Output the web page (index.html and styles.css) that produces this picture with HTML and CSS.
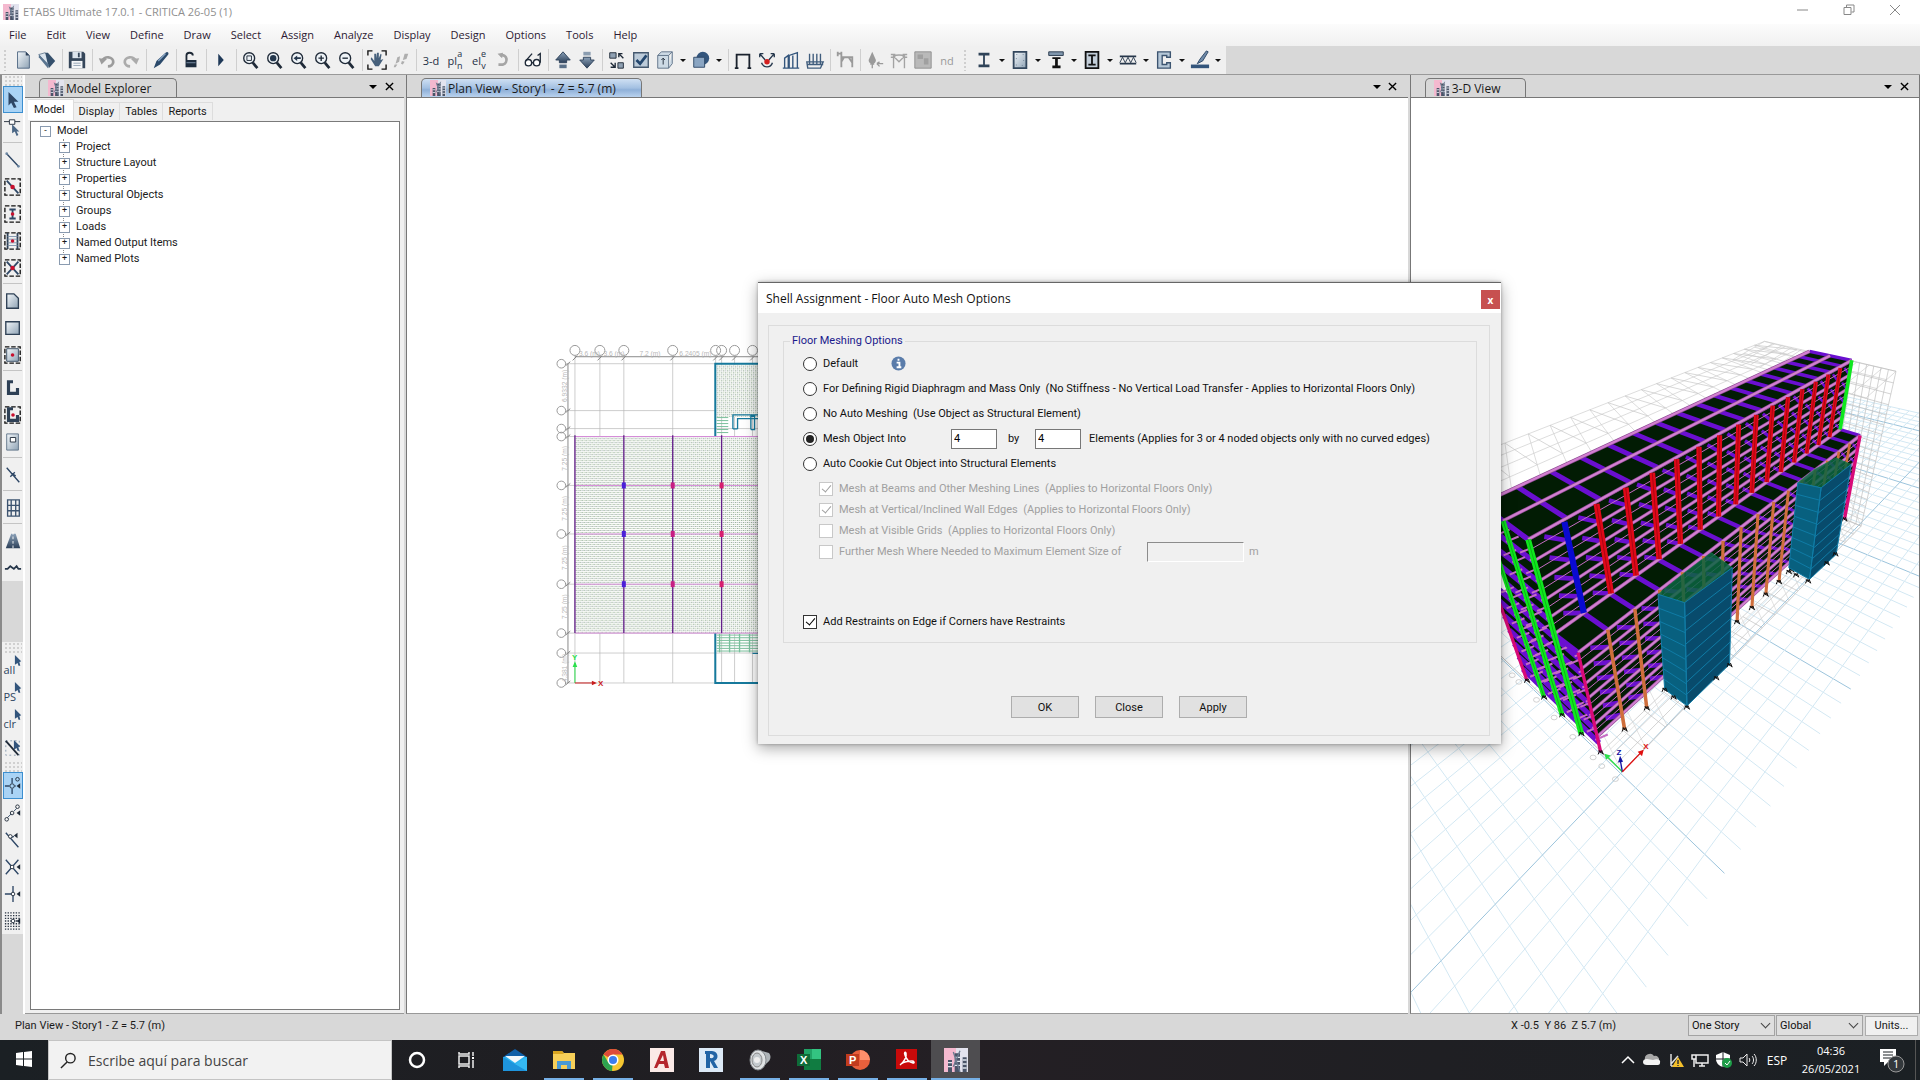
FILE: index.html
```html
<!DOCTYPE html>
<html lang="en">
<head>
  <meta charset="UTF-8">
  <meta name="viewport" content="width=device-width, initial-scale=1.0">
  <title>ETABS Ultimate 17.0.1 - CRITICA 26-05 (1)</title>
  <link rel="stylesheet" href="styles.css">
</head>
<body>
  <!-- Shared icons -->
  <svg class="icon-defs" aria-hidden="true">
    <defs>
      <linearGradient id="steel" x1="0" y1="0" x2="1" y2="1">
        <stop offset="0" stop-color="#f4f8fb"/><stop offset="1" stop-color="#8fa3b5"/>
      </linearGradient>
      <linearGradient id="navy" x1="0" y1="0" x2="0" y2="1">
        <stop offset="0" stop-color="#8ba1b8"/><stop offset="1" stop-color="#2c4059"/>
      </linearGradient>
    </defs>
    <symbol id="i-app" viewBox="0 0 18 18">
      <path d="M0 0h18v18H0z" fill="#f4b9cf"/><path d="M9 0h9v18H9z" fill="#e3e3ee"/>
      <path d="M3 9h3v9H3zM8 4h4v14H8zM14 7h3v11h-3z" fill="#4a5468"/>
      <path d="M8 7h4M8 10h4M8 13h4M14 9h3M14 12h3M14 15h3M3 11h3M3 14h3" stroke="#dfe6ee"/>
      <path d="M7 3l5 15M12 2l-5 12" stroke="#6b7b90"/>
    </symbol>
    <symbol id="i-new" viewBox="0 0 20 22"><path d="M4 2h9l4 4v14H4z" fill="url(#steel)" stroke="#4c6480"/><path d="M13 2v4h4z" fill="#2c4059"/></symbol>
    <symbol id="i-open" viewBox="0 0 20 22"><path d="M1 5l7-2 8 9-5 5z" fill="#dbe5ee" stroke="#6b8095"/><path d="M8 3l3 0 8 9-7 8-1-4z" fill="#35506c"/><path d="M1 5v3l10 12 1-4z" fill="#5a7590"/></symbol>
    <symbol id="i-save" viewBox="0 0 20 22"><path d="M1 2h16l2 2v16H1z" fill="#35465a"/><path d="M5 2h10v7H5z" fill="#dce4ec"/><path d="M11 3h2v5h-2z" fill="#35465a"/><path d="M4 12h12v8H4z" fill="#f4f6f8"/><path d="M6 14.500h8M6 17h8" stroke="#8fa0b2"/></symbol>
    <symbol id="i-undo" viewBox="0 0 20 22"><path d="M5 12a6 5 0 1 1 6 6" fill="none" stroke="#9c9c9c" stroke-width="3"/><path d="M1 9l9 1-6 6z" fill="#9c9c9c"/></symbol>
    <symbol id="i-redo" viewBox="0 0 20 22"><path d="M15 12a6 5 0 1 0-6 6" fill="none" stroke="#ababab" stroke-width="3"/><path d="M19 9l-9 1 6 6z" fill="#ababab"/></symbol>
    <symbol id="i-brush" viewBox="0 0 20 22"><path d="M2 20l3-8L15 3c2-2 4 0 3 2L9 16z" fill="#2b4a6b"/><path d="M7 12l8-8" stroke="#86a4c4" stroke-width="1.500"/></symbol>
    <symbol id="i-lock" viewBox="0 0 20 22"><path d="M5 11V6c0-4 7-4 7 0" fill="none" stroke="#1d2835" stroke-width="2"/><path d="M4 11h12v8H4z" fill="#1d2c3e"/><path d="M5 14h10" stroke="#7e93aa"/></symbol>
    <symbol id="i-play" viewBox="0 0 20 22"><path d="M7 4l6 7-6 7z" fill="#1f3958"/></symbol>
    <symbol id="i-mag" viewBox="0 0 20 22"><circle cx="8" cy="9" r="6" fill="#eef3f7" stroke="#1f2a38" stroke-width="1.500"/><path d="M12 14l5 6" stroke="#1f2a38" stroke-width="3"/></symbol>
    <symbol id="i-hand" viewBox="0 0 22 22"><path d="M1 6V1h5M16 1h5v5M21 16v5h-5M6 21H1v-5" fill="none" stroke="#111" stroke-width="1.500"/><path d="M5 8l3 4V4h2v5l1-6h2v6l2-5 1 1-1 6 3-1-5 8H9l-5-8z" fill="#47617c"/></symbol>
    <symbol id="i-walk" viewBox="0 0 20 22"><path d="M4 15l2-7 3-1-1 6zM3 16h3l-2 3H2zM12 11l2-7 4 0-2 6zM11 12l3 1-2 3-2-1z" fill="#aeaeae"/></symbol>
    <symbol id="i-rotate" viewBox="0 0 20 22"><path d="M7 6c8-2 9 8 3 10H5" fill="none" stroke="#a5a5a5" stroke-width="3"/><path d="M4 4l6-1-1 6z" fill="#a5a5a5"/></symbol>
    <symbol id="i-glasses" viewBox="0 0 20 22"><circle cx="5" cy="14" r="3.500" fill="#fff" stroke="#1f2a38" stroke-width="1.500"/><circle cx="14" cy="14" r="3.500" fill="#fff" stroke="#1f2a38" stroke-width="1.500"/><path d="M9 14h2M2 12L9 4M18 14V4l-3 2" fill="none" stroke="#1f2a38" stroke-width="1.500"/></symbol>
    <symbol id="i-up" viewBox="0 0 20 22"><path d="M10 2l8 9h-4v3H6v-3H2z" fill="url(#navy)" stroke="#2c4059"/><path d="M6 16h8v4H6z" fill="#5a7088"/></symbol>
    <symbol id="i-down" viewBox="0 0 20 22"><path d="M10 20l8-9h-4V8H6v3H2z" fill="url(#navy)" stroke="#2c4059"/><path d="M6 2h8v4H6z" fill="#8b9db0"/></symbol>
    <symbol id="i-swap" viewBox="0 0 20 22"><path d="M2 3h7v6H2zM11 14h6v6h-6z" fill="#8fa0b2" stroke="#1f2a38"/><path d="M17 9l-5-5m0 4V4h4M3 14l5 5m0-5v5H3" fill="none" stroke="#1f2a38" stroke-width="1.500"/></symbol>
    <symbol id="i-check" viewBox="0 0 20 22"><path d="M2 3h16v16H2z" fill="#bccbd9" stroke="#44586e" stroke-width="1.500"/><path d="M5 11l4 4 7-9" fill="none" stroke="#24476e" stroke-width="3"/></symbol>
    <symbol id="i-cube" viewBox="0 0 20 22"><path d="M2 6h12v14H2zM2 6l4-4h12l-4 4M18 2v13l-4 5" fill="#cddae5" stroke="#5c7086"/><path d="M8 16V9M6 11l2-2 2 2" fill="none" stroke="#1f2a38"/></symbol>
    <symbol id="i-shape" viewBox="0 0 20 22"><circle cx="12" cy="9" r="7" fill="#33557c"/><path d="M2 8h12v11H2z" fill="#8aa5c2" stroke="#2b4565"/></symbol>
    <symbol id="i-frame" viewBox="0 0 20 22"><path d="M3 20V5h14v15M1 20h4M15 20h4" fill="none" stroke="#1a222d" stroke-width="2"/></symbol>
    <symbol id="i-joint" viewBox="0 0 20 22"><path d="M2 4l6 7M18 4l-6 7M2 4v4M2 4h4M18 4v4M18 4h-4M4 14c2 6 10 6 12 0" fill="none" stroke="#26384d" stroke-width="1.500"/><circle cx="10" cy="13" r="3" fill="#d32020"/></symbol>
    <symbol id="i-loads" viewBox="0 0 20 22"><path d="M1 20h18M3 20V9l4-3v14M8 20V6l9-3v17M12 6v14" fill="none" stroke="#33557c" stroke-width="1.500"/></symbol>
    <symbol id="i-area" viewBox="0 0 20 22"><path d="M1 13h18l-3 7H2zM4 4v12M8 4v12M12 4v12M16 4v12M2 16h17" fill="none" stroke="#405d7d" stroke-width="1.500"/></symbol>
    <symbol id="i-grey1" viewBox="0 0 20 22"><path d="M2 2v5M6 2v5M2 4h4M6 19V8h12v11M6 13l3-5M14 8l4 6" fill="none" stroke="#9a9a9a" stroke-width="2"/></symbol>
    <symbol id="i-grey2" viewBox="0 0 20 22"><path d="M7 2l4 9a4 4 0 0 1-8 0z" fill="#9a9a9a"/><path d="M7 14v6M5 16l2-2 2 2M12 15h7M12 15l3-2M12 15l3 3" fill="none" stroke="#9a9a9a" stroke-width="1.500"/></symbol>
    <symbol id="i-grey3" viewBox="0 0 20 22"><path d="M4 20V7l6 6 6-6v13M1 5h5M14 5h5M1 8h5M14 8h5M4 7c3-2 9-2 12 0" fill="none" stroke="#a3a3a3" stroke-width="1.500"/></symbol>
    <symbol id="i-grey4" viewBox="0 0 20 22"><path d="M1 2h18v18H1z" fill="#b9b9b9" stroke="#8e8e8e"/><path d="M4 5h6v5H4zM11 9h5v7h-5z" fill="#a0a0a0"/></symbol>
    <symbol id="i-ibeam" viewBox="0 0 20 22"><path d="M4 3h12v3h-5v10h5v3H4v-3h5V6H4z" fill="#2f4358"/></symbol>
    <symbol id="i-rect" viewBox="0 0 20 22"><path d="M3 2h14v18H3z" fill="url(#steel)" stroke="#33475d" stroke-width="2"/><path d="M6 5h8v12H6z" fill="none" stroke="#6c8094" stroke-dasharray="1 6"/></symbol>
    <symbol id="i-tbeam" viewBox="0 0 20 22"><path d="M2 2h16v4H2z" fill="#8197ad" stroke="#26364a"/><path d="M6 8h9v2h-3v7h3v3H6v-3h3v-7H6z" fill="#111"/></symbol>
    <symbol id="i-encased" viewBox="0 0 20 22"><path d="M3 2h14v18H3z" fill="#c3ced9" stroke="#111" stroke-width="2"/><path d="M6 5h8v2h-3v8h3v2H6v-2h3V7H6z" fill="#111"/></symbol>
    <symbol id="i-truss" viewBox="0 0 20 22"><path d="M1 7h18M1 15h18" stroke="#26364a" stroke-width="2"/><path d="M1 14l3-6 3 6 3-6 3 6 3-6 3 6" fill="none" stroke="#26364a"/></symbol>
    <symbol id="i-channel" viewBox="0 0 20 22"><path d="M3 2h14v6h-4V6H8v10h5v-2h4v6H3z" fill="#b6c8d8" stroke="#3c5470" stroke-width="1.500"/></symbol>
    <symbol id="i-pen" viewBox="0 0 20 22"><path d="M7 15l3-5 7-9 2 1-6 10z" fill="#6f8aa8" stroke="#2b4565"/><path d="M0 16h20v4H0z" fill="#33557c"/></symbol>

    <!-- left toolbar -->
    <symbol id="l-pointer" viewBox="0 0 20 20"><path d="M5 1l11 11-5 0 3 6-3 1-3-6-3 3z" fill="#2e4766"/></symbol>
    <symbol id="l-reshape" viewBox="0 0 20 20"><path d="M0 4h6M12 4h6" stroke="#1f2a38"/><path d="M6 2h6v5H6z" fill="#fff" stroke="#1f2a38"/><path d="M9 7l8 8-3 0 2 4-2 1-2-5-3 2z" fill="#4b6786"/></symbol>
    <symbol id="l-line" viewBox="0 0 20 20"><path d="M3 3l13 14" stroke="#2e4766" stroke-width="1.500"/><circle cx="3" cy="3" r="1.500" fill="#6d87a3"/><circle cx="16" cy="17" r="1.500" fill="#6d87a3"/></symbol>
    <symbol id="l-dash" viewBox="0 0 20 20"><path d="M1 1h17v18H1z" fill="none" stroke="#111" stroke-width="1.500" stroke-dasharray="5 2"/></symbol>
    <symbol id="l-poly" viewBox="0 0 20 20"><path d="M3 2h8l5 5v11H3z" fill="url(#steel)" stroke="#2e4055" stroke-width="1.500"/></symbol>
    <symbol id="l-rect" viewBox="0 0 20 20"><path d="M2 3h15v14H2z" fill="url(#steel)" stroke="#2e4055" stroke-width="1.500"/></symbol>
    <symbol id="l-wall" viewBox="0 0 20 20"><path d="M10 3H5v13h10v-6" fill="none" stroke="#2e4055" stroke-width="3.500"/></symbol>
    <symbol id="l-open" viewBox="0 0 20 20"><path d="M3 1h13v18H3z" fill="url(#steel)" stroke="#5c7086"/><path d="M7 5h6v5H7z" fill="#fff" stroke="#1f2a38"/></symbol>
    <symbol id="l-link" viewBox="0 0 20 20"><path d="M3 2l14 16M7 12l5-5M8 8l5 3" stroke="#2e4766" stroke-width="1.500"/></symbol>
    <symbol id="l-grid" viewBox="0 0 20 20"><path d="M4 1h13v18H4zM4 7h13M4 13h13M8 1v18M13 1v18" fill="none" stroke="#3d5470" stroke-width="1.500"/></symbol>
    <symbol id="l-tower" viewBox="0 0 20 20"><path d="M8 2h5l5 16H2z" fill="url(#navy)"/><path d="M10 0v20" stroke="#fff" stroke-dasharray="3 2"/></symbol>
    <symbol id="l-wave" viewBox="0 0 20 20"><path d="M1 11h3l3-3 4 3 3-3 2 3h3" fill="none" stroke="#26364a" stroke-width="2"/></symbol>
    <symbol id="l-cursor" viewBox="0 0 20 20"><path d="M11 1l7 7-2 1 1 4-2 0-1-3-3 2z" fill="#33557c"/></symbol>
  </svg>

  <header class="titlebar">
    <svg class="app-icon"><use href="#i-app"/></svg>
    <span class="title-text">ETABS Ultimate 17.0.1 - CRITICA 26-05 (1)</span>
    <div class="window-buttons">
      <button aria-label="Minimize"><svg viewBox="0 0 12 12"><path d="M0 6h11"/></svg></button>
      <button aria-label="Restore"><svg viewBox="0 0 12 12"><path d="M1 3.500h7v7H1zM3.500 3V1H11v7H8.500"/></svg></button>
      <button aria-label="Close"><svg viewBox="0 0 12 12"><path d="M1 1l10 10M11 1L1 11"/></svg></button>
    </div>
  </header>

  <nav class="menubar">
    <a href="#">File</a><a href="#">Edit</a><a href="#">View</a><a href="#">Define</a><a href="#">Draw</a><a href="#">Select</a><a href="#">Assign</a><a href="#">Analyze</a><a href="#">Display</a><a href="#">Design</a><a href="#">Options</a><a href="#">Tools</a><a href="#">Help</a>
  </nav>

  <div class="toolbar-row">
    <div class="toolbar">
      <span class="grip"></span>
      <button class="tool"><svg><use href="#i-new"/></svg></button>
      <button class="tool"><svg><use href="#i-open"/></svg></button>
      <span class="sep"></span>
      <button class="tool"><svg><use href="#i-save"/></svg></button>
      <span class="sep"></span>
      <button class="tool"><svg><use href="#i-undo"/></svg></button>
      <button class="tool"><svg><use href="#i-redo"/></svg></button>
      <span class="sep"></span>
      <button class="tool"><svg><use href="#i-brush"/></svg></button>
      <span class="sep"></span>
      <button class="tool"><svg><use href="#i-lock"/></svg></button>
      <span class="sep"></span>
      <button class="tool"><svg><use href="#i-play"/></svg></button>
      <span class="sep"></span>
      <button class="tool"><svg viewBox="0 0 20 22"><use href="#i-mag"/><path d="M5.500 6.500h5v5h-5z" fill="none" stroke="#1f2a38"/></svg></button>
      <button class="tool"><svg viewBox="0 0 20 22"><use href="#i-mag"/><circle cx="8" cy="9" r="3.500" fill="#24374d"/></svg></button>
      <button class="tool"><svg viewBox="0 0 20 22"><use href="#i-mag"/><path d="M4 9l4-3v2h4v2H8v2z" fill="#24374d"/></svg></button>
      <button class="tool"><svg viewBox="0 0 20 22"><use href="#i-mag"/><path d="M5 9h6M8 6v6" stroke="#1f2a38" stroke-width="1.500"/></svg></button>
      <button class="tool"><svg viewBox="0 0 20 22"><use href="#i-mag"/><path d="M5 9h6" stroke="#1f2a38" stroke-width="1.500"/></svg></button>
      <span class="sep"></span>
      <button class="tool"><svg><use href="#i-hand"/></svg></button>
      <button class="tool"><svg><use href="#i-walk"/></svg></button>
      <span class="sep"></span>
      <button class="tool tool-text">3-d</button>
      <button class="tool tool-text">pl<span class="stack"><span>a</span><span>n</span></span></button>
      <button class="tool tool-text">el<span class="stack"><span>e</span><span>v</span></span></button>
      <button class="tool"><svg><use href="#i-rotate"/></svg></button>
      <span class="sep"></span>
      <button class="tool"><svg><use href="#i-glasses"/></svg></button>
      <span class="sep"></span>
      <button class="tool"><svg><use href="#i-up"/></svg></button>
      <button class="tool"><svg><use href="#i-down"/></svg></button>
      <span class="sep"></span>
      <button class="tool"><svg><use href="#i-swap"/></svg></button>
      <button class="tool"><svg><use href="#i-check"/></svg></button>
      <button class="tool drop"><svg><use href="#i-cube"/></svg></button>
      <button class="tool drop"><svg><use href="#i-shape"/></svg></button>
      <span class="sep"></span>
      <button class="tool"><svg><use href="#i-frame"/></svg></button>
      <button class="tool"><svg><use href="#i-joint"/></svg></button>
      <button class="tool"><svg><use href="#i-loads"/></svg></button>
      <button class="tool"><svg><use href="#i-area"/></svg></button>
      <span class="sep"></span>
      <button class="tool"><svg><use href="#i-grey1"/></svg></button>
      <span class="sep"></span>
      <button class="tool"><svg><use href="#i-grey2"/></svg></button>
      <button class="tool"><svg><use href="#i-grey3"/></svg></button>
      <button class="tool"><svg><use href="#i-grey4"/></svg></button>
      <button class="tool tool-text muted">nd</button>
      <span class="grip wide"></span>
      <button class="tool drop"><svg><use href="#i-ibeam"/></svg></button>
      <button class="tool drop"><svg><use href="#i-rect"/></svg></button>
      <button class="tool drop"><svg><use href="#i-tbeam"/></svg></button>
      <button class="tool drop"><svg><use href="#i-encased"/></svg></button>
      <button class="tool drop"><svg><use href="#i-truss"/></svg></button>
      <button class="tool drop"><svg><use href="#i-channel"/></svg></button>
      <button class="tool drop"><svg><use href="#i-pen"/></svg></button>
    </div>
  </div>

  <main class="workspace">
    <aside class="side-tools">
      <div class="side-group">
        <span class="side-grip"></span>
        <button class="side-tool active"><svg><use href="#l-pointer"/></svg></button>
        <button class="side-tool"><svg><use href="#l-reshape"/></svg></button>
        <span class="side-sep"></span>
        <button class="side-tool"><svg><use href="#l-line"/></svg></button>
        <button class="side-tool"><svg viewBox="0 0 20 20"><use href="#l-dash"/><path d="M3 3l13 14" stroke="#2e4766" stroke-width="2"/><circle cx="9.500" cy="10" r="2.500" fill="#c8102e"/></svg></button>
        <button class="side-tool"><svg viewBox="0 0 20 20"><use href="#l-dash"/><path d="M6 5h7M6 15h7M9.500 5v10" stroke="#2e4766" stroke-width="2"/><circle cx="9.500" cy="10" r="2" fill="#c8102e"/></svg></button>
        <button class="side-tool"><svg viewBox="0 0 20 20"><use href="#l-dash"/><path d="M4 1v18M15 1v18" stroke="#2e4055" stroke-width="2"/><path d="M4 5h11M4 8h11M4 12h11M4 15h11" stroke="#7a92ab"/><circle cx="9.500" cy="10" r="2" fill="#c8102e"/></svg></button>
        <button class="side-tool"><svg viewBox="0 0 20 20"><use href="#l-dash"/><path d="M3 3l13 14M16 3L3 17" stroke="#2e4766" stroke-width="2"/><circle cx="9.500" cy="10" r="2.500" fill="#c8102e"/></svg></button>
        <span class="side-sep"></span>
        <button class="side-tool"><svg><use href="#l-poly"/></svg></button>
        <button class="side-tool"><svg><use href="#l-rect"/></svg></button>
        <button class="side-tool"><svg viewBox="0 0 20 20"><use href="#l-dash"/><path d="M3 3h13v14H3z" fill="url(#steel)" stroke="#33475d"/><circle cx="9.500" cy="10" r="2" fill="#c8102e"/></svg></button>
        <span class="side-sep"></span>
        <button class="side-tool"><svg><use href="#l-wall"/></svg></button>
        <button class="side-tool"><svg viewBox="0 0 20 20"><use href="#l-dash"/><use href="#l-wall"/><circle cx="10" cy="10" r="2" fill="#c8102e"/></svg></button>
        <button class="side-tool"><svg><use href="#l-open"/></svg></button>
        <span class="side-sep"></span>
        <button class="side-tool"><svg><use href="#l-link"/></svg></button>
        <span class="side-sep"></span>
        <button class="side-tool"><svg><use href="#l-grid"/></svg></button>
        <span class="side-sep"></span>
        <button class="side-tool"><svg><use href="#l-tower"/></svg></button>
        <button class="side-tool"><svg><use href="#l-wave"/></svg></button>
      </div>
      <div class="side-group">
        <span class="side-grip"></span>
        <button class="side-tool side-text">all<svg><use href="#l-cursor"/></svg></button>
        <button class="side-tool side-text">PS<svg><use href="#l-cursor"/></svg></button>
        <button class="side-tool side-text">clr<svg><use href="#l-cursor"/></svg></button>
        <button class="side-tool"><svg viewBox="0 0 20 20"><path d="M2 2h15v16H2z" fill="none" stroke="#8195aa" stroke-dasharray="2 3"/><path d="M2 2l14 16" stroke="#1f2a38" stroke-width="2"/><use href="#l-cursor"/></svg></button>
        <span class="side-grip"></span>
        <button class="side-tool active"><svg viewBox="0 0 20 20"><path d="M9 1v6M9 13v6M1 10h5M12 10h1" stroke="#2e4766" stroke-width="1.500"/><circle cx="9" cy="10" r="2.500" fill="none" stroke="#1f2a38"/><circle cx="15" cy="2.500" r="2" fill="none" stroke="#1f2a38"/><path d="M18 7v6l-4-3z" fill="#1f2a38"/></svg></button>
        <button class="side-tool"><svg viewBox="0 0 20 20"><path d="M4 15l4-4M11 8l3-3" stroke="#2e4766"/><circle cx="3" cy="17" r="2" fill="none" stroke="#1f2a38"/><circle cx="9" cy="10" r="2" fill="none" stroke="#1f2a38"/><circle cx="15" cy="3" r="2" fill="none" stroke="#1f2a38"/><path d="M18 7v6l-4-3z" fill="#1f2a38"/></svg></button>
        <button class="side-tool"><svg viewBox="0 0 20 20"><path d="M2 2l14 16M6 8l5-2" stroke="#2e4766" stroke-width="1.500"/><circle cx="7" cy="6" r="2" fill="#fff" stroke="#1f2a38"/><path d="M15 2v6l-4-3z" fill="#1f2a38"/></svg></button>
        <button class="side-tool"><svg viewBox="0 0 20 20"><path d="M2 2l14 16M16 2L2 18" stroke="#2e4766" stroke-width="1.500"/><circle cx="9" cy="10" r="2" fill="#fff" stroke="#1f2a38"/><path d="M18 7v6l-4-3z" fill="#1f2a38"/></svg></button>
        <button class="side-tool"><svg viewBox="0 0 20 20"><path d="M10 1v18M1 10h9" stroke="#2e4766" stroke-width="1.500"/><circle cx="10" cy="10" r="2" fill="#fff" stroke="#1f2a38"/><path d="M18 7v6l-4-3z" fill="#1f2a38"/></svg></button>
        <button class="side-tool"><svg viewBox="0 0 20 20"><path d="M1 1h17M1 4h17M1 7h17M1 10h17M1 13h17M1 16h17M1 19h17" stroke="#2b3644" stroke-width="1.500" stroke-dasharray="1.500 1.500"/><circle cx="10" cy="10" r="2" fill="#fff" stroke="#1f2a38"/><path d="M18 7v6l-4-3z" fill="#1f2a38"/></svg></button>
      </div>
    </aside>

    <section class="dock explorer">
      <div class="dock-head">
        <h2 class="dock-tab"><svg class="app-icon"><use href="#i-app"/></svg>Model Explorer</h2>
        <button class="dock-menu" aria-label="Menu"></button>
        <button class="dock-close" aria-label="Close"><svg viewBox="0 0 10 10"><path d="M1 1l8 8M9 1L1 9"/></svg></button>
      </div>
      <div class="explorer-tabs">
        <button class="selected">Model</button><button>Display</button><button>Tables</button><button>Reports</button>
      </div>
      <div class="tree-box">
        <ul class="tree">
          <li class="root open">Model
            <ul>
              <li>Project</li>
              <li>Structure Layout</li>
              <li>Properties</li>
              <li>Structural Objects</li>
              <li>Groups</li>
              <li>Loads</li>
              <li>Named Output Items</li>
              <li>Named Plots</li>
            </ul>
          </li>
        </ul>
      </div>
    </section>

    <section class="dock plan">
      <div class="dock-head">
        <h2 class="dock-tab current"><svg class="app-icon"><use href="#i-app"/></svg>Plan View - Story1 - Z = 5.7 (m)</h2>
        <button class="dock-menu" aria-label="Menu"></button>
        <button class="dock-close" aria-label="Close"><svg viewBox="0 0 10 10"><path d="M1 1l8 8M9 1L1 9"/></svg></button>
      </div>
      <svg class="view" id="plan-view" viewBox="-399 -699 3009 2748" preserveAspectRatio="xMinYMin meet">
        <defs>
          <pattern id="slab" width="12" height="12" patternUnits="userSpaceOnUse">
            <path d="M0 0h12v12H0z" fill="#fbfcfa"/>
            <path d="M0 0h3v3H0zM6 6h3v3H6z" fill="#7f9c82"/><path d="M6 0h3v3H6z" fill="#a9b3b8"/><path d="M0 6h3v3H0z" fill="#b9cdb2"/>
          </pattern>
        </defs>
      </svg>
    </section>

    <section class="dock view3d">
      <div class="dock-head">
        <h2 class="dock-tab"><svg class="app-icon"><use href="#i-app"/></svg>3-D View</h2>
        <button class="dock-menu" aria-label="Menu"></button>
        <button class="dock-close" aria-label="Close"><svg viewBox="0 0 10 10"><path d="M1 1l8 8M9 1L1 9"/></svg></button>
      </div>
      <svg class="view" id="model-view" viewBox="33 -666 1527 2748" preserveAspectRatio="xMinYMin meet"></svg>
    </section>
  </main>

  <footer class="statusbar">
    <span class="status-view">Plan View - Story1 - Z = 5.7 (m)</span>
    <span class="status-coords">X -0.5&nbsp; Y 86&nbsp; Z 5.7 (m)</span>
    <span class="combo"><select aria-label="Stories"><option>One Story</option></select></span>
    <span class="combo"><select aria-label="Coordinate system"><option>Global</option></select></span>
    <button class="units">Units...</button>
  </footer>

  <div class="taskbar">
    <button class="start" aria-label="Start"><svg viewBox="0 0 16 16"><path d="M0 2l7-1v6.500H0zM8 1l8-1v7.500H8zM0 8.500h7V15l-7-1zM8 8.500h8V16l-8-1z" fill="#fff"/></svg></button>
    <label class="search">
      <svg viewBox="0 0 18 18"><circle cx="11" cy="6.500" r="5" fill="none" stroke="#222" stroke-width="1.500"/><path d="M7.500 10.500L1 17" stroke="#222" stroke-width="1.500"/></svg>
      <input type="text" placeholder="Escribe aquí para buscar" aria-label="Buscar">
    </label>
    <button class="task system" aria-label="Cortana"><svg viewBox="0 0 24 24"><circle cx="12" cy="12" r="7" fill="none" stroke="#fff" stroke-width="2.500"/></svg></button>
    <button class="task system" aria-label="Task view"><svg viewBox="0 0 24 24"><path d="M5 8h10v8H5zM5 4v2h10V4M5 20v-2h10v2M19 4v4M19 12v8" fill="none" stroke="#eee" stroke-width="1.500"/><path d="M18 9h2v2h-2z" fill="#fff"/></svg></button>
    <button class="task" aria-label="Mail"><svg viewBox="0 0 24 24"><path d="M0 9l12-8 12 8v3H0z" fill="#0f5fa8"/><path d="M0 9h24v14H0z" fill="#2bb2ee"/><path d="M2 8h20l-10 7z" fill="#f2f7fb"/><path d="M0 9l24 14H0z" fill="#1e94dc"/><path d="M0 9l12 7L24 9v14z" fill="#40c0f5" opacity=".5"/></svg></button>
    <button class="task running" aria-label="File Explorer"><svg viewBox="0 0 24 24"><path d="M1 3h9l2 2h11v16H1z" fill="#f7cf58"/><path d="M1 3h9l2 3H1z" fill="#d9a520"/><path d="M5 13h14v8h-4v-4H9v4H5z" fill="#4a9ad4"/></svg></button>
    <button class="task running" aria-label="Chrome"><svg viewBox="0 0 24 24"><circle cx="12" cy="12" r="11" fill="#f5c631"/><path d="M12 12L2.500 6.500A11 11 0 0 1 21.500 6.500H12z" fill="#dd4b39"/><path d="M12 12l-1 11A11 11 0 0 1 2.500 6.500L7 14z" fill="#2da44f"/><circle cx="12" cy="12" r="5.500" fill="#fff"/><circle cx="12" cy="12" r="4" fill="#3b7ded"/></svg></button>
    <button class="task" aria-label="AutoCAD"><svg viewBox="0 0 24 24"><path d="M0 0h24v24H0z" fill="#fbeae7"/><path d="M4 20L11 3h4l4 17h-4l-1-4H9l-2 4zM10 13h4l-1-6z" fill="#b5262d"/></svg></button>
    <button class="task" aria-label="Revit"><svg viewBox="0 0 24 24"><path d="M0 0h24v24H0z" fill="#dce9f6"/><path d="M6 3h7c7 0 7 9 2 10l4 7h-4l-4-7v7H7V6H6zM11 6v4c5 1 5-4 0-4z" fill="#2163a5"/></svg></button>
    <button class="task running" aria-label="Audio"><svg viewBox="0 0 24 24"><path d="M10 2l11 3c3 4 1 8-2 10l-8 7z" fill="#aeb4b8"/><ellipse cx="10" cy="12" rx="8" ry="10" fill="#dfe2e4" stroke="#84898d"/><ellipse cx="9" cy="12" rx="5" ry="7" fill="#c4cace" stroke="#888"/><circle cx="9" cy="12" r="3" fill="#eee"/></svg></button>
    <button class="task running" aria-label="Excel"><svg viewBox="0 0 24 24"><path d="M7 1h17v21H7z" fill="#21a366"/><path d="M7 11h17v11H7z" fill="#107c41"/><path d="M15 1h9v10h-9z" fill="#33c481"/><path d="M0 6h13v12H0z" fill="#0f6b38"/><text x="3" y="16" class="tile-letter">X</text></svg></button>
    <button class="task running" aria-label="PowerPoint"><svg viewBox="0 0 24 24"><circle cx="14" cy="12" r="10" fill="#e8603c"/><path d="M14 2a10 10 0 0 1 10 10H14z" fill="#ff8f6b"/><path d="M0 6h13v12H0z" fill="#c23b1e"/><text x="3" y="16" class="tile-letter">P</text></svg></button>
    <button class="task running" aria-label="Acrobat"><svg viewBox="0 0 24 24"><path d="M1 1h21v20H1z" fill="#c80a0a"/><path d="M5 17c4-3 7-8 6-12-1-2-2 0-1 2 1 4 4 7 8 8 2 0 1-2-1-2-4 0-8 1-11 3" fill="none" stroke="#fff" stroke-width="1.500"/></svg></button>
    <button class="task running focused" aria-label="ETABS"><svg viewBox="0 0 18 18"><use href="#i-app"/></svg></button>

    <div class="tray">
      <button aria-label="Show hidden icons"><svg viewBox="0 0 18 18"><path d="M3 12l6-6 6 6" fill="none" stroke="#fff" stroke-width="1.500"/></svg></button>
      <button aria-label="OneDrive"><svg viewBox="0 0 18 18"><path d="M2 9a5 5 0 0 1 9-4 4 4 0 0 1 5 5L6 12z" fill="#a8a8a8"/><path d="M4 14a4 3 0 0 1 0-6l6 1c5-2 8 0 7 3 0 1-1 2-2 2z" fill="#f4f4f4"/></svg></button>
      <button aria-label="Warning"><svg viewBox="0 0 18 18"><path d="M4 3v12M4 15h9M4 13l7-8" stroke="#ddd" stroke-width="1.500"/><path d="M11 6l6 10H5z" fill="#f5c02b"/><path d="M11 9v4M11 14v1" stroke="#333" stroke-width="1.500"/></svg></button>
      <button aria-label="Network"><svg viewBox="0 0 18 18"><path d="M5 4h12v8H5zM11 12v3M8 15h6M1 4h4v4H1zM3 8v8" fill="none" stroke="#eee" stroke-width="1.500"/></svg></button>
      <button aria-label="Security"><svg viewBox="0 0 18 18"><path d="M8 1l7 3v4c0 4-3 7-7 8-4-1-7-4-7-8V4z" fill="#fff"/><path d="M8 1v15M1 8h14" stroke="#1b2024"/><circle cx="12" cy="12" r="5" fill="#1e9e48"/><path d="M10 12l2 2 3-4" fill="none" stroke="#fff"/></svg></button>
      <button aria-label="Volume"><svg viewBox="0 0 18 18"><path d="M1 7h3l4-4v12l-4-4H1zM10 7c1 1 1 3 0 4M13 5c2 2 2 6 0 8M15 3c3 3 3 9 0 12" fill="none" stroke="#eee"/></svg></button>
      <button class="lang">ESP</button>
      <div class="clock"><span>04:36</span><span>26/05/2021</span></div>
      <button class="notify" aria-label="Notifications"><svg viewBox="0 0 26 26"><path d="M1 2h16v13H9l-4 4v-4H1z" fill="#fff"/><path d="M4 5h10M4 8h10M4 11h8" stroke="#1b2024"/><circle cx="17" cy="17" r="8" fill="#33383c" stroke="#999"/><text x="14" y="21" class="badge">1</text></svg></button>
    </div>
  </div>

  <form class="dialog">
    <div class="dialog-title">
      <span>Shell Assignment - Floor Auto Mesh Options</span>
      <button type="button" class="dialog-close" aria-label="Close">x</button>
    </div>
    <div class="dialog-body">
      <div class="panel">
        <fieldset>
          <legend>Floor Meshing Options</legend>
          <div class="row"><label class="opt"><input type="radio" name="mesh">Default</label>
            <svg class="info" viewBox="0 0 16 16"><circle cx="8" cy="8" r="7.500" fill="#5a7caa"/><path d="M6 7h3v5M6 12h5M8 3v2" fill="none" stroke="#fff" stroke-width="2"/></svg></div>
          <div class="row"><label class="opt"><input type="radio" name="mesh">For Defining Rigid Diaphragm and Mass Only&nbsp; (No Stiffness - No Vertical Load Transfer - Applies to Horizontal Floors Only)</label></div>
          <div class="row"><label class="opt"><input type="radio" name="mesh">No Auto Meshing&nbsp; (Use Object as Structural Element)</label></div>
          <div class="row">
            <label class="opt mesh-into"><input type="radio" name="mesh" checked>Mesh Object Into</label>
            <input type="text" class="count" value="4" aria-label="Elements along first edge">
            <span class="by">by</span>
            <input type="text" class="count" value="4" aria-label="Elements along second edge">
            <span class="after">Elements (Applies for 3 or 4 noded objects only with no curved edges)</span>
          </div>
          <div class="row"><label class="opt"><input type="radio" name="mesh">Auto Cookie Cut Object into Structural Elements</label></div>
          <div class="sub-options">
            <div class="row"><label class="opt"><input type="checkbox" checked disabled>Mesh at Beams and Other Meshing Lines&nbsp; (Applies to Horizontal Floors Only)</label></div>
            <div class="row"><label class="opt"><input type="checkbox" checked disabled>Mesh at Vertical/Inclined Wall Edges&nbsp; (Applies to Horizontal Floors Only)</label></div>
            <div class="row"><label class="opt"><input type="checkbox" disabled>Mesh at Visible Grids&nbsp; (Applies to Horizontal Floors Only)</label></div>
            <div class="row"><label class="opt further"><input type="checkbox" disabled>Further Mesh Where Needed to Maximum Element Size of</label>
              <input type="text" class="size" disabled aria-label="Maximum element size"><span class="unit">m</span></div>
          </div>
          <div class="row restraints"><label class="opt"><input type="checkbox" checked>Add Restraints on Edge if Corners have Restraints</label></div>
        </fieldset>
        <div class="dialog-buttons">
          <button type="button">OK</button>
          <button type="button">Close</button>
          <button type="button">Apply</button>
        </div>
      </div>
    </div>
  </form>

  <script src="views.js"></script>
</body>
</html>
```
FILE: styles.css
```css
* {
  box-sizing: border-box;
}

body {
  margin: 0;
  height: 100vh;
  display: flex;
  flex-direction: column;
  overflow: hidden;
  position: relative;
  font-family: Roboto, "Liberation Sans", Arial, sans-serif;
  font-size: 11px;
  color: #1a1a1a;
  background-color: #d8d8d8;
}

button {
  font: inherit;
  color: inherit;
  border: none;
  background: none;
  padding: 0;
}

.icon-defs {
  position: absolute;
  width: 0;
  height: 0;
}

.app-icon {
  width: 16px;
  height: 16px;
  flex: none;
}

/* Title and menu */
.titlebar {
  height: 24px;
  flex: none;
  display: flex;
  align-items: center;
  padding: 0 2px 1px 3px;
  background-color: #fff;
}

.title-text {
  margin-left: 4px;
  flex: 1;
  font-family: "Open Sans", sans-serif;
  font-size: 11px;
  color: #8f8f8f;
}

.window-buttons {
  display: flex;
}

.window-buttons button {
  width: 46px;
  height: 22px;
}

.window-buttons svg {
  width: 12px;
  height: 12px;
  fill: none;
  stroke: #888;
}

.menubar {
  height: 22px;
  flex: none;
  display: flex;
  align-items: center;
  gap: 20px;
  padding: 0 0 2px 9px;
  background: linear-gradient(#fcfcfc, #f1f1f1);
  font-family: "Open Sans", sans-serif;
  font-size: 11px;
}

.menubar a {
  color: #2d1a33;
  text-decoration: none;
}

/* Main toolbar */
.toolbar-row {
  height: 29px;
  flex: none;
  border-bottom: 1px solid #999;
}

.toolbar {
  display: inline-flex;
  align-items: center;
  height: 28px;
  padding-right: 2px;
  background-color: #f0f0f0;
}

.grip {
  width: 5px;
  height: 22px;
  margin: 0 3px;
  background-image: radial-gradient(#cfcfcf 1px, transparent 1px);
  background-size: 4px 4px;
}

.grip.wide {
  margin: 0 4px;
}

.tool {
  width: 24px;
  height: 26px;
  flex: none;
  display: flex;
  align-items: center;
  justify-content: center;
}

.tool svg {
  width: 20px;
  height: 20px;
  flex: none;
}

.tool.drop {
  width: 36px;
  justify-content: flex-start;
  padding-left: 2px;
}

.tool.drop::after {
  content: "";
  margin-left: 5px;
  border: 3px solid transparent;
  border-top-color: #111;
  border-bottom: none;
}

.tool-text {
  font-family: "Open Sans", sans-serif;
  font-size: 11px;
  color: #1f3146;
}

.tool-text.muted {
  color: #999;
}

.stack {
  display: flex;
  flex-direction: column;
  font-size: 9px;
  line-height: 12px;
}

.sep {
  width: 1px;
  height: 22px;
  margin: 0 2px 0 3px;
  background-color: #cfcfcf;
}

/* Workspace */
.workspace {
  flex: 1;
  min-height: 0;
  display: flex;
}

.side-tools {
  width: 25px;
  flex: none;
  border-left: 2px solid #8a8a8a;
  border-right: 2px solid #fff;
  display: flex;
  flex-direction: column;
  gap: 61px;
}

.side-group {
  display: flex;
  flex-direction: column;
  align-items: center;
  background-color: #f0f0f0;
}

.side-grip {
  width: 18px;
  height: 11px;
  background-image: radial-gradient(#d0d0d0 1px, transparent 1px);
  background-size: 4px 4px;
}

.side-tool {
  width: 20px;
  height: 27px;
  flex: none;
  display: flex;
  align-items: center;
  justify-content: center;
}

.side-tool svg {
  width: 18px;
  height: 20px;
}

.side-tool.active {
  background-color: #a9d3f5;
  border: 1px solid #3c8fd0;
}

.side-text {
  position: relative;
  font-family: "Open Sans", sans-serif;
  font-size: 11px;
  padding: 5px 0 0 1px;
  justify-content: flex-start;
  color: #2d4560;
}

.side-text svg {
  position: absolute;
  right: 0;
  top: 0;
}

.side-sep {
  width: 19px;
  height: 1px;
  margin: 2px 0 3px;
  background-color: #c4c4c4;
}

.dock {
  display: flex;
  flex-direction: column;
  min-width: 0;
  background-color: #fff;
  border-left: 1px solid #777;
  border-bottom: 1px solid #999;
}

.explorer {
  width: 379px;
  flex: none;
  background-color: #f0f0f0;
  border-left: none;
}

.plan {
  flex: 1002;
  margin-left: 2px;
}

.view3d {
  flex: 509;
  margin-left: 2px;
  border-right: 1px solid #777;
}

.dock-head {
  height: 23px;
  flex: none;
  display: flex;
  align-items: flex-end;
  background-color: #d8d8d8;
  border-bottom: 1px solid #777;
}

.dock-tab {
  display: flex;
  align-items: center;
  gap: 2px;
  height: 19px;
  margin: 0 auto 0 14px;
  padding: 0 25px 0 8px;
  border: 1px solid #777;
  border-bottom: none;
  border-radius: 5px 5px 0 0;
  font-family: "Open Sans", sans-serif;
  font-size: 12px;
  font-weight: normal;
  white-space: nowrap;
}

.dock-tab.current {
  background: linear-gradient(#cfe0f3, #a3c0e2 50%, #8fb0d8 60%, #b9d2ee);
}

.dock-menu {
  width: 16px;
  height: 20px;
  display: flex;
  align-items: center;
  justify-content: center;
}

.dock-menu::before {
  content: "";
  border: 4px solid transparent;
  border-top-color: #000;
  border-bottom: none;
}

.dock-close {
  width: 16px;
  height: 20px;
  margin-right: 7px;
}

.dock-close svg {
  width: 9px;
  height: 9px;
  stroke: #000;
  stroke-width: 1.5;
}

.view {
  flex: 1;
  width: 100%;
  min-height: 0;
  display: block;
}

.explorer-tabs {
  display: flex;
  align-items: flex-end;
  height: 22px;
  padding-left: 3px;
}

.explorer-tabs button {
  height: 18px;
  padding: 0 5px 1px;
  border: 1px solid #ddd;
  border-left: none;
  border-bottom: none;
}

.explorer-tabs .selected {
  height: 21px;
  padding: 0 8px 2px 6px;
  background-color: #fff;
}

.tree-box {
  flex: 1;
  margin: 1px 4px 3px 5px;
  padding: 1px 0 0 9px;
  background-color: #fff;
  border: 1px solid #7a7a7a;
}

.tree,
.tree ul {
  list-style: none;
  margin: 0;
  padding: 0;
  line-height: 16px;
}

.tree li::before {
  content: "+";
  display: inline-block;
  width: 9px;
  height: 9px;
  margin-right: 6px;
  border: 1px solid #8a9bb0;
  background-color: #fff;
  font-size: 9px;
  line-height: 7px;
  text-align: center;
  vertical-align: 1px;
}

.tree .root::before {
  content: "-";
}

.tree ul {
  margin-left: 19px;
  position: relative;
}

.tree ul::before {
  content: "";
  position: absolute;
  left: 4px;
  top: 0;
  height: 120px;
  border-left: 1px dotted #888;
}

.tree ul li {
  position: relative;
}

/* Status bar */
.statusbar {
  height: 26px;
  flex: none;
  display: flex;
  align-items: center;
  padding: 0 2px 3px 15px;
  gap: 1px;
}

.status-view {
  flex: 1;
}

.status-coords {
  width: 176px;
}

.combo {
  position: relative;
  width: 87px;
}

.combo select {
  appearance: none;
  width: 100%;
  height: 21px;
  padding: 0 3px;
  border: 1px solid #a3a3a3;
  border-radius: 0;
  background-color: #dfdfdf;
  font: inherit;
  color: #111;
}

.combo::after {
  content: "";
  position: absolute;
  right: 6px;
  top: 5px;
  width: 6px;
  height: 6px;
  border-right: 1px solid #444;
  border-bottom: 1px solid #444;
  transform: rotate(45deg);
}

.units {
  width: 53px;
  height: 20px;
  margin-left: 1px;
  border: 1px solid #adadad;
  background-color: #f0f0f0;
}

/* Taskbar */
.taskbar {
  height: 40px;
  flex: none;
  display: flex;
  background: linear-gradient(90deg, #1b2024, #1f1e22 30%, #241f24 50%, #1f1f23 75%, #1b2024);
  color: #fff;
  font-family: "Open Sans", sans-serif;
}

.start {
  width: 48px;
}

.start svg {
  width: 16px;
  height: 16px;
}

.search {
  width: 344px;
  display: flex;
  align-items: center;
  gap: 11px;
  padding-left: 11px;
  background-color: #f2f2f2;
  border: 1px solid #c4c4c4;
}

.search svg {
  width: 17px;
  height: 17px;
}

.search input {
  flex: 1;
  min-width: 0;
  padding: 0;
  border: none;
  background: none;
  font-family: "Open Sans", sans-serif;
  font-size: 14px;
}

.search input::placeholder {
  color: #444;
  opacity: 1;
}

.task {
  width: 49px;
  height: 40px;
  position: relative;
}

.task svg {
  width: 24px;
  height: 24px;
  vertical-align: middle;
}

.running::after {
  content: "";
  position: absolute;
  left: 5px;
  right: 4px;
  bottom: 0;
  height: 2px;
  background-color: #76b0e6;
}

.focused {
  background-color: #4e4d50;
}

.focused::after {
  left: 0;
  right: 0;
}

.tile-letter {
  font: bold 11px "Liberation Sans", sans-serif;
  fill: #fff;
}

.tray {
  margin-left: auto;
  display: flex;
  align-items: center;
  padding-right: 4px;
}

.tray button {
  width: 24px;
  height: 40px;
}

.tray svg {
  width: 18px;
  height: 18px;
  vertical-align: middle;
}

.tray .lang {
  width: 34px;
  font-size: 12px;
}

.clock {
  width: 74px;
  display: flex;
  flex-direction: column;
  align-items: center;
  font-size: 11px;
  line-height: 18px;
}

.tray .notify {
  width: 48px;
  border-right: 1px solid #555;
}

.notify svg {
  width: 26px;
  height: 26px;
}

.badge {
  font: 11px "Open Sans", sans-serif;
  fill: #fff;
}

/* Dialog */
.dialog {
  position: absolute;
  left: 758px;
  top: 282px;
  width: 743px;
  background-color: #f0f0f0;
  border-top: 1px solid #666;
  box-shadow: 0 4px 14px rgba(0, 0, 0, 0.35), 0 0 3px rgba(0, 0, 0, 0.3);
  color: #111;
}

.dialog-title {
  height: 30px;
  display: flex;
  align-items: center;
  justify-content: space-between;
  padding: 0 1px 0 8px;
  background-color: #fff;
  font-family: "Open Sans", sans-serif;
  font-size: 12px;
}

.dialog-close {
  width: 19px;
  height: 19px;
  margin-top: 3px;
  background-color: #c75050;
  color: #fff;
  font-size: 10px;
  font-weight: bold;
  line-height: 16px;
}

.dialog-body {
  padding: 12px 11px 8px 10px;
}

.panel {
  padding: 8px 12px 17px 14px;
  border: 1px solid #dcdcdc;
}

fieldset {
  margin: 0;
  padding: 3px 0 8px 19px;
  border: 1px solid #dcdcdc;
}

legend {
  margin-left: -13px;
  padding: 0 2px;
  height: 14px;
  line-height: 14px;
  color: #1a1a8c;
}

.row {
  height: 25px;
  display: flex;
  align-items: center;
  white-space: nowrap;
}

.opt {
  display: flex;
  align-items: center;
  gap: 6px;
}

.opt input {
  appearance: none;
  width: 14px;
  height: 14px;
  flex: none;
  margin: 0;
  border: 1px solid #333;
  background-color: #fff;
  display: grid;
  place-items: center;
}

.opt input[type="radio"] {
  border-radius: 50%;
}

.opt input[type="radio"]:checked::before {
  content: "";
  width: 8px;
  height: 8px;
  border-radius: 50%;
  background-color: #222;
}

.opt input[type="checkbox"]:checked::before {
  content: "";
  width: 4px;
  height: 8px;
  margin-bottom: 2px;
  border-right: 1px solid currentColor;
  border-bottom: 1px solid currentColor;
  transform: rotate(40deg);
}

.opt input:disabled {
  border-color: #c8c8c8;
  color: #a0a0a0;
}

.info {
  width: 15px;
  height: 15px;
  margin-left: 33px;
}

.mesh-into {
  width: 148px;
}

.count {
  width: 46px;
  height: 20px;
  padding: 0 2px;
  border: 1px solid #777;
  background-color: #fff;
  font: inherit;
}

.by {
  width: 38px;
  padding-left: 11px;
}

.after {
  margin-left: 8px;
}

.sub-options {
  margin-left: 16px;
  padding-top: 2px;
  color: #a0a0a0;
}

.sub-options .row {
  height: 21px;
}

.further {
  width: 328px;
}

.size {
  width: 97px;
  height: 20px;
  border: 1px solid #8c8c8c;
  border-right-color: #fff;
  border-bottom-color: #fff;
  background-color: #f0f0f0;
}

.unit {
  margin-left: 5px;
}

.restraints {
  margin-top: 47px;
}

.dialog-buttons {
  display: flex;
  justify-content: center;
  gap: 16px;
  margin-top: 53px;
  padding-right: 2px;
}

.dialog-buttons button {
  width: 68px;
  height: 22px;
  border: 1px solid #adadad;
  background-color: #e1e1e1;
}

/* Drawings */
.dim {
  font-family: "Liberation Sans", sans-serif;
  font-size: 20px;
  fill: #b8b8b8;
}

.axis {
  font-family: "Liberation Sans", sans-serif;
  font-size: 24px;
  font-weight: bold;
}
```
FILE: views.js
```js
const SVG_NS = 'http://www.w3.org/2000/svg';

function add(svg, tag, attrs, text) {
  const el = document.createElementNS(SVG_NS, tag);
  for (const key in attrs) {
    el.setAttribute(key, attrs[key]);
  }
  if (text) {
    el.textContent = text;
  }
  svg.appendChild(el);
  return el;
}

function line(svg, a, b, color, width) {
  add(svg, 'path', { d: `M${a[0]} ${a[1]}L${b[0]} ${b[1]}`, stroke: color, 'stroke-width': width, fill: 'none' });
}

function poly(svg, points, fill, stroke, width) {
  add(svg, 'polygon', { points: points.map(p => p.join()).join(' '), fill: fill, stroke: stroke || 'none', 'stroke-width': width || 1 });
}

// Perspective map of a cols x rows grid onto four screen corners
function plane(p0, p1, p2, p3, cols, rows) {
  const dx1 = p1[0] - p2[0], dy1 = p1[1] - p2[1];
  const dx2 = p3[0] - p2[0], dy2 = p3[1] - p2[1];
  const sx = p0[0] - p1[0] + p2[0] - p3[0];
  const sy = p0[1] - p1[1] + p2[1] - p3[1];
  const den = dx1 * dy2 - dx2 * dy1;
  const g = (sx * dy2 - dx2 * sy) / den;
  const h = (dx1 * sy - sx * dy1) / den;
  return function (col, row) {
    const u = col / cols, v = row / rows;
    const w = g * u + h * v + 1;
    return [
      ((p1[0] - p0[0] + g * p1[0]) * u + (p3[0] - p0[0] + h * p3[0]) * v + p0[0]) / w,
      ((p1[1] - p0[1] + g * p1[1]) * u + (p3[1] - p0[1] + h * p3[1]) * v + p0[1]) / w,
      w
    ].slice(0, w > 0.05 ? 2 : 0);
  };
}

function mesh(svg, map, cols, rows, color, width) {
  for (let i = 0; i <= cols; i++) line(svg, map(i, 0), map(i, rows), color, width);
  for (let j = 0; j <= rows; j++) line(svg, map(0, j), map(cols, j), color, width);
}

// ---- Plan view ----
function drawPlan() {
  const svg = document.getElementById('plan-view');
  const xs = [106, 181, 253, 400, 529, 547, 586, 640];
  const ys = [100, 241, 295, 319, 466, 612, 763, 910, 970, 1060];

  xs.forEach(x => line(svg, [x, 76], [x, 1060], '#b5b5b5', 2));
  ys.forEach(y => line(svg, [78, y], [900, y], '#b5b5b5', 2));

  add(svg, 'rect', { x: 106, y: 319, width: 760, height: 591, fill: 'url(#slab)' });
  add(svg, 'rect', { x: 529, y: 103, width: 300, height: 157, fill: 'url(#slab)' });
  add(svg, 'path', { d: 'M900 100H528V319M528 910V1060H900', stroke: '#16799c', 'stroke-width': 6, fill: 'none' });
  add(svg, 'path', { d: 'M581 296V254H700M595 296V265H700M581 296H595M635 298V258H646V298H635M640 971H700', stroke: '#16799c', 'stroke-width': 4, fill: 'none' });

  // stairs
  for (let y = 262; y < 316; y += 9) line(svg, [532, y], [567, y], '#79bf9c', 3);
  for (let y = 916; y < 970; y += 8) line(svg, [532, y], [700, y], '#79bf9c', 3);
  [541, 571, 601, 631].forEach(x => line(svg, [x, 912], [x, 968], '#79bf9c', 4));

  [319, 466, 612, 763, 910].forEach(y => line(svg, [106, y], [900, y], '#d58ad9', 3));
  [106, 253, 400, 547].forEach(x => line(svg, [x, 315], [x, 910], '#64208a', 4));
  [466, 612, 763].forEach(y => {
    [[253, '#4a20d8'], [400, '#c81e82'], [547, '#d81e6e']].forEach(c => {
      add(svg, 'rect', { x: c[0] - 6, y: y - 9, width: 12, height: 18, fill: c[1] });
    });
  });

  // grid bubbles and dimension lines
  line(svg, [106, 79], [900, 79], '#8a8a8a', 3);
  line(svg, [85, 100], [85, 1060], '#8a8a8a', 3);
  xs.forEach(x => {
    add(svg, 'circle', { cx: x, cy: 60, r: 15, fill: 'none', stroke: '#999', 'stroke-width': 3 });
    line(svg, [x - 7, 90], [x + 7, 76], '#888', 3);
  });
  ys.forEach(y => {
    add(svg, 'circle', { cx: 65, cy: y, r: 13, fill: 'none', stroke: '#999', 'stroke-width': 3 });
    line(svg, [78, y + 6], [92, y - 6], '#888', 3);
  });
  [[118, '3.6 (m)'], [192, '3.6 (m)'], [300, '7.2 (m)'], [420, '6.2405 (m)']].forEach(d => {
    add(svg, 'text', { x: d[0], y: 77, class: 'dim' }, d[1]);
  });
  [[215, '6.9332 (m)'], [422, '7.25 (m)'], [572, '7.25 (m)'], [720, '7.25 (m)'], [868, '7.25 (m)'], [1058, '4.381 (m)']].forEach(d => {
    add(svg, 'text', { x: 0, y: 0, class: 'dim', transform: `translate(83 ${d[0]}) rotate(-90)` }, d[1]);
  });

  line(svg, [106, 1060], [106, 1000], '#2be04c', 3);
  poly(svg, [[99, 1012], [106, 995], [113, 1012]], '#2be04c');
  line(svg, [106, 1060], [165, 1060], '#c81e1e', 3);
  poly(svg, [[157, 1053], [172, 1060], [157, 1067]], '#c81e1e');
  add(svg, 'text', { x: 97, y: 992, class: 'axis', fill: '#2be04c' }, 'Y');
  add(svg, 'text', { x: 175, y: 1069, class: 'axis', fill: '#c81e1e' }, 'X');
}

// ---- 3-D view ----
const DARK = '#021c04', PURPLE = '#6a0fd0', PINK = '#c66cc4';

// Open storeys seen from above: slabs, cross beams, edge beams
function storeys(svg, map, cols, rows, back) {
  poly(svg, [map(0, 0), map(cols, 0), map(cols, rows), map(0, rows)], DARK);
  for (let j = 0; j < rows; j++) {
    for (let i = 1; i <= cols; i++) {
      line(svg, map(i, j + 1), map(i - back, j + 0.25), PURPLE, 15 - i * 0.5);
    }
    line(svg, map(0, j + 0.45), map(cols, j + 0.45), PINK, 3);
  }
  for (let j = 0; j <= rows; j++) {
    line(svg, map(0, j), map(cols, j), '#8d4a94', 10);
    line(svg, map(0, j), map(cols, j), '#d27fd0', 6);
  }
}

function roof(svg, map, cols, rows) {
  poly(svg, [map(0, 0), map(cols, 0), map(cols, rows), map(0, rows)], DARK);
  for (let i = 0; i <= cols; i++) line(svg, map(i, 0), map(i, rows), PURPLE, 16 - i * 0.4);
  for (let j = 0; j <= rows; j++) {
    line(svg, map(0, j), map(cols, j), '#8d4a94', 11);
    line(svg, map(0, j), map(cols, j), '#d27fd0', 7);
  }
}

function tower(svg, left, right, top) {
  poly(svg, top, 'rgba(10,100,65,.85)', '#13804f', 2);
  poly(svg, left, '#08607f');
  poly(svg, right, '#084b6c');
  [left, right].forEach(f => mesh(svg, plane(f[0], f[1], f[2], f[3], 1, 8), 1, 8, '#0f7ba6', 3));
}

function support(svg, x, y) {
  add(svg, 'path', { d: `M${x - 8} ${y + 6}l5-12 3 6 3-6 5 12M${x - 7} ${y - 5}l14 9`, stroke: '#111', 'stroke-width': 3, fill: 'none' });
}

function drawModel() {
  const svg = document.getElementById('model-view');

  // ground grid
  const ground = plane([428, 1608], [1035, 975], [1325, 1152], [740, 2005], 13, 6);
  for (let i = -16; i <= 48; i++) {
    for (let j = -14; j < 6; j++) {
      const a = ground(i, j), b = ground(i, j + 1);
      if (a.length && b.length) line(svg, a, b, i % 10 === 4 ? '#9cc4dc' : '#d3e8f3', 3);
    }
  }
  for (let j = -14; j < 6; j++) {
    for (let i = -16; i < 48; i++) {
      const a = ground(i, j), b = ground(i + 1, j);
      if (a.length && b.length) line(svg, a, b, j === 0 ? '#9cc4dc' : '#d3e8f3', 3);
    }
  }

  // grid system box
  const back = plane([240, 400], [1095, 65], [1230, 100], [240, 560], 18, 4);
  mesh(svg, back, 18, 4, '#cbcbcb', 2);
  for (let i = 0; i < 18; i++) line(svg, back(i, 0), back(i + 1, 3), '#c4c4c4', 2);
  mesh(svg, plane([1095, 65], [1490, 155], [1400, 235], [1000, 120], 12, 3), 12, 3, '#cbcbcb', 2);
  mesh(svg, plane([1300, 110], [1490, 155], [1385, 620], [1250, 560], 9, 18), 9, 18, '#bdbdbd', 2);
  mesh(svg, plane([603, 1300], [1335, 600], [1385, 620], [668, 1358], 18, 3), 18, 3, '#bdbdbd', 2);
  mesh(svg, plane([560, 1150], [1335, 500], [1385, 620], [668, 1358], 18, 3), 18, 3, '#d4d4d4', 2);
  line(svg, [250, 960], [668, 1358], '#c0c0c0', 3);

  // side of the building
  const side = plane([385, 660], [241, 554], [433, 1135], [545, 1245], 2, 12);
  poly(svg, [side(0, 0), side(2, 0), side(2, 11), side(0, 11)], DARK);
  poly(svg, [side(-1, 5), side(3, 5), side(3, 11), side(-1, 11)], DARK);
  for (let j = 0; j <= 11; j++) {
    const from = j < 5 ? 0 : -1, to = j < 5 ? 2 : 3;
    line(svg, side(from, j), side(to, j), PURPLE, 16);
    for (let i = from; i < to; i++) {
      [0.2, 0.6].forEach(k => {
        const p = side(i + k, j + 0.1);
        line(svg, p, [p[0] + 38, p[1] - 16], PINK, 6);
      });
    }
  }

  const front = plane([535, 1000], [1382, 348], [1338, 575], [595, 1250], 16, 6);
  storeys(svg, front, 16, 6, 0.6);
  const upper = plane([385, 660], [1357, 122], [1322, 330], [463, 945], 16, 5);
  storeys(svg, upper, 16, 5, 0.6);
  roof(svg, plane([241, 554], [1230, 95], [1357, 122], [385, 660], 16, 2), 16, 2);
  roof(svg, plane([463, 945], [1322, 330], [1382, 348], [535, 1000], 16, 1), 16, 1);

  // columns
  for (let i = 1; i < 16; i++) {
    const color = i === 1 ? '#0a0ad0' : '#e00818';
    line(svg, upper(i, 0.1), upper(i, 5), color, 19 - i * 0.5);
    if (i > 1) line(svg, upper(i, 0.1), upper(i, 5), '#8c0410', 2);
  }
  line(svg, upper(16, 0), upper(16, 5), '#0fe81e', 11);

  const base = plane([535, 1000], [1382, 348], [1335, 600], [603, 1300], 16, 7);
  for (let i = 1; i < 16; i++) {
    line(svg, base(i, 0), base(i, 7), '#cf6f3c', 11 - i * 0.2);
    support(svg, base(i, 7)[0], base(i, 7)[1]);
  }
  [[side(3, 5), side(3, 12)], [[535, 1000], [603, 1300]], [base(16, 0), base(16, 7)]].forEach(c => {
    line(svg, c[0], c[1], '#d80a78', 10);
    support(svg, c[1][0], c[1][1]);
  });
  for (let i = 0; i < 3; i++) {
    line(svg, side(i, 0), side(i, 12), '#0fe81e', 17 - i * 2);
    line(svg, side(i, 0), side(i, 12), '#0a9a14', 2);
    support(svg, side(i, 12)[0], side(i, 12)[1]);
  }

  // lift cores
  tower(svg,
    [[1195, 490], [1265, 505], [1230, 780], [1168, 745]],
    [[1265, 505], [1355, 435], [1310, 705], [1230, 780]],
    [[1195, 490], [1245, 450], [1310, 415], [1355, 435], [1265, 505]]);
  tower(svg,
    [[775, 825], [855, 850], [862, 1160], [795, 1110]],
    [[855, 850], [998, 745], [990, 1035], [862, 1160]],
    [[775, 825], [855, 760], [935, 700], [998, 745], [855, 850]]);
  [[795, 1112], [822, 1135], [862, 1165], [990, 1038], [950, 1077], [1168, 758], [1190, 768], [1226, 786], [1308, 705], [1282, 732]]
    .forEach(p => support(svg, p[0], p[1]));

  [[337, 1068], [357, 1088], [410, 1142], [463, 1195], [519, 1253], [580, 1315], [606, 1341], [647, 1380]].forEach(p => {
    add(svg, 'ellipse', { cx: p[0], cy: p[1], rx: 9, ry: 7, fill: 'none', stroke: '#bbb', 'stroke-width': 2 });
  });

  // axes
  line(svg, [668, 1358], [625, 1315], '#2be04c', 4);
  poly(svg, [[614, 1304], [633, 1309], [619, 1322]], '#2be04c');
  line(svg, [668, 1358], [662, 1325], '#1010a0', 4);
  poly(svg, [[655, 1330], [661, 1310], [670, 1328]], '#1010a0');
  line(svg, [668, 1358], [722, 1302], '#e01010', 4);
  poly(svg, [[714, 1298], [732, 1292], [727, 1311]], '#e01010');
  add(svg, 'text', { x: 650, y: 1308, class: 'axis', fill: '#1010a0' }, 'Z');
  add(svg, 'text', { x: 731, y: 1291, class: 'axis', fill: '#e01010' }, 'X');
}

drawPlan();
drawModel();
```
